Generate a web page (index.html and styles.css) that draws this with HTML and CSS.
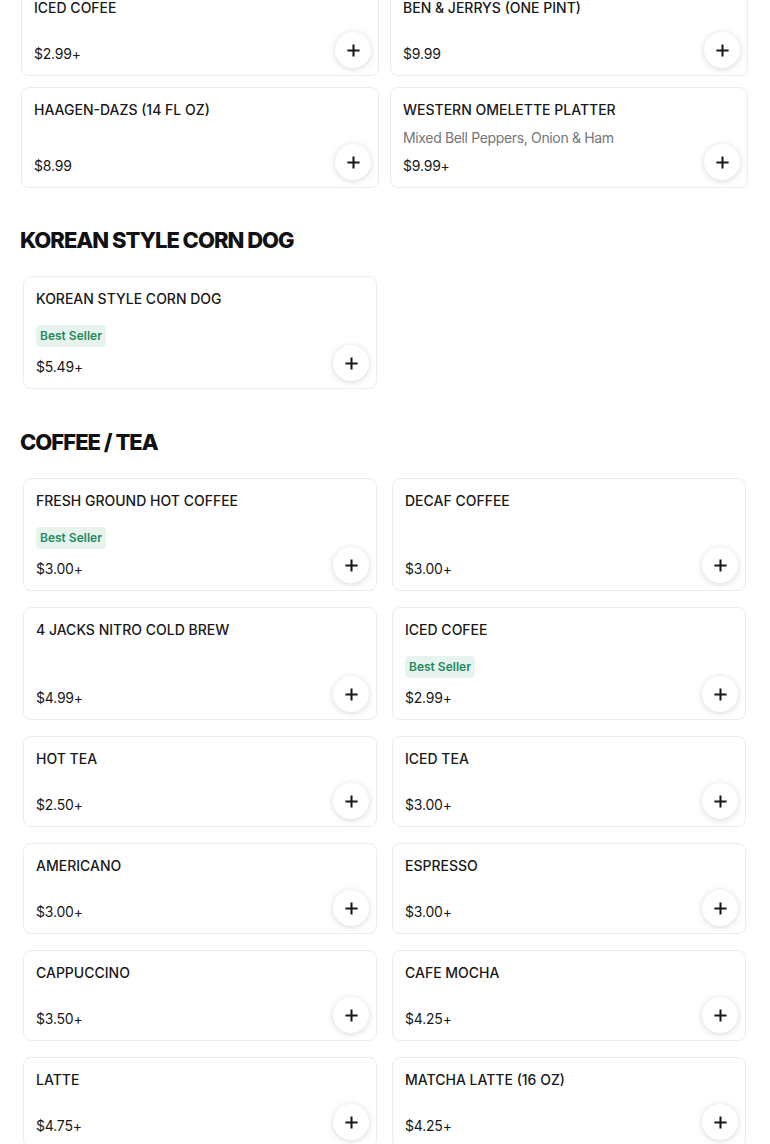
FILE: index.html
```html
<!DOCTYPE html>
<html>
<head>
<meta charset="utf-8">
<link rel="stylesheet" href="styles.css">
</head>
<body>
<div class="page">
  <div class="grid grid-top">
    <div class="card"><div class="title">ICED COFEE</div><div class="price">$2.99+</div><button class="add"><svg viewBox="0 0 16 16"><path d="M8 1.5v13M1.5 8h13"/></svg></button></div>
    <div class="card"><div class="title">BEN &amp; JERRYS (ONE PINT)</div><div class="price">$9.99</div><button class="add"><svg viewBox="0 0 16 16"><path d="M8 1.5v13M1.5 8h13"/></svg></button></div>
    <div class="card"><div class="title">HAAGEN-DAZS (14 FL OZ)</div><div class="price">$8.99</div><button class="add"><svg viewBox="0 0 16 16"><path d="M8 1.5v13M1.5 8h13"/></svg></button></div>
    <div class="card"><div class="title">WESTERN OMELETTE PLATTER</div><div class="desc">Mixed Bell Peppers, Onion &amp; Ham</div><div class="price">$9.99+</div><button class="add"><svg viewBox="0 0 16 16"><path d="M8 1.5v13M1.5 8h13"/></svg></button></div>
  </div>

  <h2 class="heading">KOREAN STYLE CORN DOG</h2>
  <div class="grid">
    <div class="card"><div class="title">KOREAN STYLE CORN DOG</div><div class="badge">Best Seller</div><div class="price">$5.49+</div><button class="add"><svg viewBox="0 0 16 16"><path d="M8 1.5v13M1.5 8h13"/></svg></button></div>
  </div>

  <h2 class="heading heading-next">COFFEE / TEA</h2>
  <div class="grid">
    <div class="card"><div class="title">FRESH GROUND HOT COFFEE</div><div class="badge">Best Seller</div><div class="price">$3.00+</div><button class="add"><svg viewBox="0 0 16 16"><path d="M8 1.5v13M1.5 8h13"/></svg></button></div>
    <div class="card"><div class="title">DECAF COFFEE</div><div class="price">$3.00+</div><button class="add"><svg viewBox="0 0 16 16"><path d="M8 1.5v13M1.5 8h13"/></svg></button></div>
    <div class="card"><div class="title">4 JACKS NITRO COLD BREW</div><div class="price">$4.99+</div><button class="add"><svg viewBox="0 0 16 16"><path d="M8 1.5v13M1.5 8h13"/></svg></button></div>
    <div class="card"><div class="title">ICED COFEE</div><div class="badge">Best Seller</div><div class="price">$2.99+</div><button class="add"><svg viewBox="0 0 16 16"><path d="M8 1.5v13M1.5 8h13"/></svg></button></div>
    <div class="card"><div class="title">HOT TEA</div><div class="price">$2.50+</div><button class="add"><svg viewBox="0 0 16 16"><path d="M8 1.5v13M1.5 8h13"/></svg></button></div>
    <div class="card"><div class="title">ICED TEA</div><div class="price">$3.00+</div><button class="add"><svg viewBox="0 0 16 16"><path d="M8 1.5v13M1.5 8h13"/></svg></button></div>
    <div class="card"><div class="title">AMERICANO</div><div class="price">$3.00+</div><button class="add"><svg viewBox="0 0 16 16"><path d="M8 1.5v13M1.5 8h13"/></svg></button></div>
    <div class="card"><div class="title">ESPRESSO</div><div class="price">$3.00+</div><button class="add"><svg viewBox="0 0 16 16"><path d="M8 1.5v13M1.5 8h13"/></svg></button></div>
    <div class="card"><div class="title">CAPPUCCINO</div><div class="price">$3.50+</div><button class="add"><svg viewBox="0 0 16 16"><path d="M8 1.5v13M1.5 8h13"/></svg></button></div>
    <div class="card"><div class="title">CAFE MOCHA</div><div class="price">$4.25+</div><button class="add"><svg viewBox="0 0 16 16"><path d="M8 1.5v13M1.5 8h13"/></svg></button></div>
    <div class="card"><div class="title">LATTE</div><div class="price">$4.75+</div><button class="add"><svg viewBox="0 0 16 16"><path d="M8 1.5v13M1.5 8h13"/></svg></button></div>
    <div class="card"><div class="title">MATCHA LATTE (16 OZ)</div><div class="price">$4.25+</div><button class="add"><svg viewBox="0 0 16 16"><path d="M8 1.5v13M1.5 8h13"/></svg></button></div>
  </div>
</div>
</body>
</html>
```

FILE: styles.css
```css
* { box-sizing: border-box; }
html, body { margin: 0; padding: 0; background: #fff; }
body {
  font-family: Inter, "Liberation Sans", sans-serif;
  color: #191919;
  overflow: hidden;
}
.page {
  padding: 0 24px 40px 23px;
}
.grid {
  display: grid;
  grid-template-columns: 1fr 1fr;
  column-gap: 15px;
  row-gap: 16px;
}
.grid-top {
  margin: -15px -2px 0 -2px;
  column-gap: 11px;
  row-gap: 11px;
}
.heading {
  margin: 38px 0 22px -3px;
  font-size: 22px;
  line-height: 28px;
  font-weight: 800;
  letter-spacing: -1px;
  color: #111;
}
.heading-next { margin-top: 39px; }
.card {
  position: relative;
  display: flex;
  flex-direction: column;
  align-items: flex-start;
  min-height: 91px;
  padding: 11px 12px 11px 12px;
  border: 1px solid #ececec;
  border-radius: 8px;
  background: #fff;
}
.title {
  font-size: 14px;
  line-height: 22px;
  font-weight: 500;
  color: #191919;
}
.desc {
  margin-top: 7px;
  margin-bottom: 8px;
  font-size: 14px;
  line-height: 20px;
  color: #767676;
  letter-spacing: -0.35px;
}
.badge {
  margin-top: 15px;
  margin-bottom: 10px;
  height: 22px;
  line-height: 22px;
  padding: 0 4px;
  border-radius: 4px;
  background: #e7f4ee;
  color: #1f8a5f;
  font-size: 12px;
  font-weight: 600;
}
.price {
  margin-top: auto;
  font-size: 14px;
  line-height: 20px;
  letter-spacing: -0.2px;
  color: #191919;
}
.add {
  position: absolute;
  right: 7px;
  bottom: 7px;
  width: 36px;
  height: 36px;
  padding: 0;
  border: none;
  border-radius: 50%;
  background: #fff;
  box-shadow: 0 1px 6px rgba(0,0,0,0.16);
  display: flex;
  align-items: center;
  justify-content: center;
}
.add svg {
  width: 15px;
  height: 15px;
  fill: none;
  stroke: #191919;
  stroke-width: 2.2;
}
```
